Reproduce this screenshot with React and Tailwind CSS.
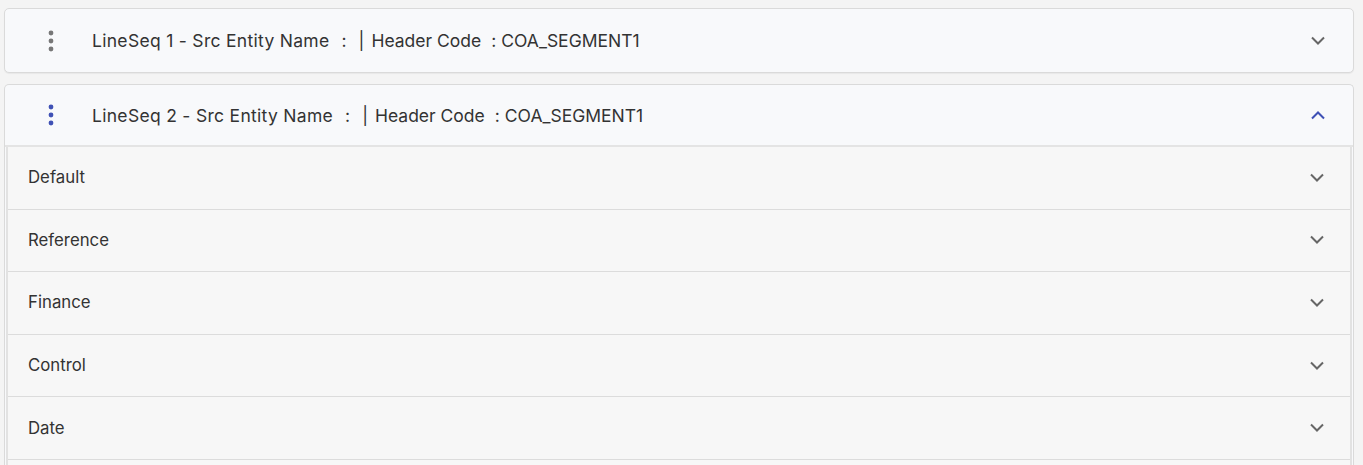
import React from 'react';

const Chevron = ({ up = false, className = '' }) => (
  <svg width="16" height="10" viewBox="0 0 16 10" className={className} fill="none">
    <path
      d={up ? 'M2 8.5 L8 2.5 L14 8.5' : 'M2 1.5 L8 7.5 L14 1.5'}
      stroke="currentColor"
      strokeWidth="2"
    />
  </svg>
);

const Dots = ({ className = '' }) => (
  <svg width="6" height="22" viewBox="0 0 6 22" className={className}>
    <circle cx="3" cy="3" r="2.4" fill="currentColor" />
    <circle cx="3" cy="11" r="2.4" fill="currentColor" />
    <circle cx="3" cy="19" r="2.4" fill="currentColor" />
  </svg>
);

const Title = ({ seq }) => (
  <span className="ml-[38px] pt-[2px] flex items-center whitespace-nowrap">
    <span className="tracking-[0.3px]">LineSeq {seq} - Src Entity Name</span>
    <span className="ml-[12px]">:</span>
    <span className="ml-[12px]">|</span>
    <span className="ml-[7px]">Header Code</span>
    <span className="ml-[10px]">:</span>
    <span className="ml-[5px]">COA_SEGMENT1</span>
  </span>
);

const sections = ['Default', 'Reference', 'Finance', 'Control', 'Date'];

const App = () => {
  return (
    <div
      className="w-[1363px] h-[465px] overflow-hidden bg-[#f4f4f4] pl-[4px] pr-[9px] pt-[8px] text-[#333] text-[17.5px]"
      style={{ fontFamily: 'Inter, "Noto Sans", sans-serif' }}
    >
      {/* collapsed line */}
      <div className="h-[65px] rounded-[5px] border border-[#dadada] bg-[#f8f9fb] shadow-[0_1px_1px_rgba(0,0,0,0.05)] flex items-center">
        <Dots className="ml-[43px] text-[#777]" />
        <Title seq={1} />
        <Chevron className="ml-auto mr-[27px] text-[#666]" />
      </div>

      {/* expanded line */}
      <div className="mt-[11px] rounded-t-[5px] border border-[#dadada] border-b-0 bg-[#f8f9fb]">
        <div className="h-[62px] flex items-center border-b-2 border-[#e4e4e4]">
          <Dots className="ml-[43px] text-[#3f51b5]" />
          <Title seq={2} />
          <Chevron up className="ml-auto mr-[27px] text-[#3f51b5]" />
        </div>
        <div className="ml-[1px] mr-[1px] border-l-2 border-r-2 border-[#e2e2e2] bg-[#f7f7f7] text-[16.8px]">
          {sections.map((s) => (
            <div key={s} className="h-[62.6px] flex items-center border-b border-[#dcdcdc] pl-[20px]">
              <span>{s}</span>
              <Chevron className="ml-auto mr-[25px] text-[#666]" />
            </div>
          ))}
          <div className="h-[62px]" />
        </div>
      </div>
    </div>
  );
};

export default App;
